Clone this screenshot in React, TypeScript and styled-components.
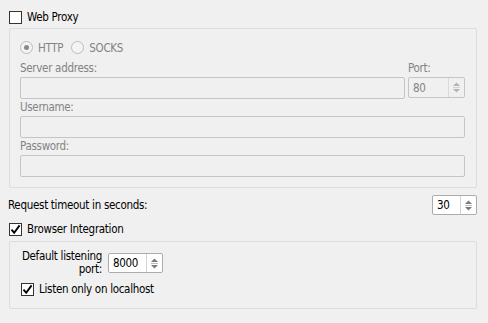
import React from "react";
import styled, { createGlobalStyle } from "styled-components";

const GlobalStyle = createGlobalStyle`
  html, body {
    margin: 0;
    padding: 0;
    background: #f0f0f0;
  }
  body {
    font-family: "DejaVu Sans Condensed", "DejaVu Sans", Verdana, sans-serif;
    font-size: 11.5px;
    color: #000;
  }
`;

const Page = styled.div`
  width: 477px;
  height: 323px;
  padding: 11px 0 0 8px;
  box-sizing: border-box;
  background: #f0f0f0;
  letter-spacing: -0.3px;
`;

const CheckRow = styled.label<{ $indent?: number }>`
  display: flex;
  align-items: center;
  gap: 5px;
  height: 13px;
  margin-left: ${({ $indent }) => $indent ?? 1}px;
  line-height: 13px;
`;

const Box = styled.span`
  width: 13px;
  height: 13px;
  box-sizing: border-box;
  border: 1px solid #333;
  background: #fff;
  display: flex;
  align-items: center;
  justify-content: center;
`;

const GroupBox = styled.div<{ $top: number }>`
  margin: ${({ $top }) => $top}px 0 0 1px;
  width: 468px;
  box-sizing: border-box;
  border: 1px solid #dcdcdc;
  border-radius: 2px;
`;

const ProxyBody = styled.div`
  padding: 11px 11px 10px 10px;
`;

const RadioRow = styled.div`
  display: flex;
  align-items: center;
  height: 13px;
  margin-top: 1px;
  color: #838383;
`;

const Radio = styled.span<{ $on?: boolean }>`
  width: 13px;
  height: 13px;
  box-sizing: border-box;
  border: 1px solid #bcbcbc;
  border-radius: 50%;
  background: #f4f4f4;
  display: flex;
  align-items: center;
  justify-content: center;
  margin-right: 5px;
  &::after {
    content: "";
    display: ${({ $on }) => ($on ? "block" : "none")};
    width: 5px;
    height: 5px;
    border-radius: 50%;
    background: #8a8a8a;
  }
`;

const RadioLabel = styled.span`
  margin-right: 8px;
`;

const AddressGrid = styled.div`
  display: grid;
  grid-template-columns: 385px 57px;
  column-gap: 3px;
  margin-top: 8px;
`;

const Label = styled.div<{ $disabled?: boolean }>`
  height: 13px;
  line-height: 13px;
  margin-bottom: 2px;
  color: ${({ $disabled }) => ($disabled ? "#838383" : "#000")};
  white-space: nowrap;
`;

const Field = styled.div`
  margin-top: 2px;
`;

const TextInput = styled.div`
  height: 22px;
  box-sizing: border-box;
  border: 1px solid #c5c5c5;
  border-radius: 2px;
  background: #f0f0f0;
`;

const Spin = styled.div<{ $width: number; $height: number; $disabled?: boolean }>`
  width: ${({ $width }) => $width}px;
  height: ${({ $height }) => $height}px;
  box-sizing: border-box;
  border: 1px solid ${({ $disabled }) => ($disabled ? "#c5c5c5" : "#acacac")};
  border-radius: 2px;
  background: ${({ $disabled }) => ($disabled ? "#f0f0f0" : "#fff")};
  color: ${({ $disabled }) => ($disabled ? "#838383" : "#000")};
  display: flex;
`;

const SpinValue = styled.div`
  flex: 1;
  display: flex;
  align-items: center;
  padding-left: 4px;
`;

const SpinButtons = styled.div<{ $disabled?: boolean }>`
  width: 15px;
  border-left: 1px solid ${({ $disabled }) => ($disabled ? "#dadada" : "#d4d4d4")};
  display: flex;
  align-items: center;
  justify-content: center;
`;

const TimeoutRow = styled.div`
  display: flex;
  align-items: center;
  justify-content: space-between;
  margin-top: 7px;
  height: 20px;
`;

const BrowserRow = styled.div`
  margin-top: 8px;
`;

const BrowserBody = styled.div`
  padding: 8px 0 0 10px;
  height: 66px;
  box-sizing: border-box;
`;

const PortGrid = styled.div`
  display: grid;
  grid-template-columns: 82px 55px;
  column-gap: 6px;
  justify-content: start;
  align-items: center;
  margin-bottom: 7px;
`;

const PortLabel = styled.div`
  text-align: right;
  line-height: 13px;
  white-space: nowrap;
`;

const Tick = () => (
  <svg width="11" height="11" viewBox="0 0 11 11">
    <path d="M1.5 5.6 L4.2 8.8 L9.6 1.4" fill="none" stroke="#000" strokeWidth="1.9" />
  </svg>
);

const Arrows = ({ color }: { color: string }) => (
  <svg width="9" height="13" viewBox="0 0 9 13">
    <path d="M4.5 1.5 L8 5 L1 5 Z" fill={color} />
    <rect x="1" y="6" width="7" height="1" fill={color} opacity="0.5" />
    <path d="M1 8 L8 8 L4.5 11.5 Z" fill={color} />
  </svg>
);

const SpinBox = ({
  value,
  width,
  height,
  disabled
}: {
  value: string;
  width: number;
  height: number;
  disabled?: boolean;
}) => (
  <Spin $width={width} $height={height} $disabled={disabled}>
    <SpinValue>{value}</SpinValue>
    <SpinButtons $disabled={disabled}>
      <Arrows color={disabled ? "#b4b4b4" : "#7a7a7a"} />
    </SpinButtons>
  </Spin>
);

export default function App() {
  return (
    <>
      <GlobalStyle />
      <Page>
        <CheckRow>
          <Box />
          <span>Web Proxy</span>
        </CheckRow>
        <GroupBox $top={4}>
          <ProxyBody>
            <RadioRow>
              <Radio $on />
              <RadioLabel>HTTP</RadioLabel>
              <Radio />
              <RadioLabel>SOCKS</RadioLabel>
            </RadioRow>
            <AddressGrid>
              <div>
                <Label $disabled>Server address:</Label>
                <TextInput />
              </div>
              <div>
                <Label $disabled>Port:</Label>
                <SpinBox value="80" width={57} height={21} disabled />
              </div>
            </AddressGrid>
            <Field>
              <Label $disabled>Username:</Label>
              <TextInput />
            </Field>
            <Field>
              <Label $disabled>Password:</Label>
              <TextInput />
            </Field>
          </ProxyBody>
        </GroupBox>
        <TimeoutRow>
          <span>Request timeout in seconds:</span>
          <SpinBox value="30" width={45} height={20} />
        </TimeoutRow>
        <BrowserRow>
          <CheckRow>
            <Box>
              <Tick />
            </Box>
            <span>Browser Integration</span>
          </CheckRow>
        </BrowserRow>
        <GroupBox $top={5}>
          <BrowserBody>
            <PortGrid>
              <PortLabel>
                Default listening
                <br />
                port:
              </PortLabel>
              <SpinBox value="8000" width={55} height={20} />
            </PortGrid>
            <CheckRow $indent={1}>
              <Box>
                <Tick />
              </Box>
              <span>Listen only on localhost</span>
            </CheckRow>
          </BrowserBody>
        </GroupBox>
      </Page>
    </>
  );
}
